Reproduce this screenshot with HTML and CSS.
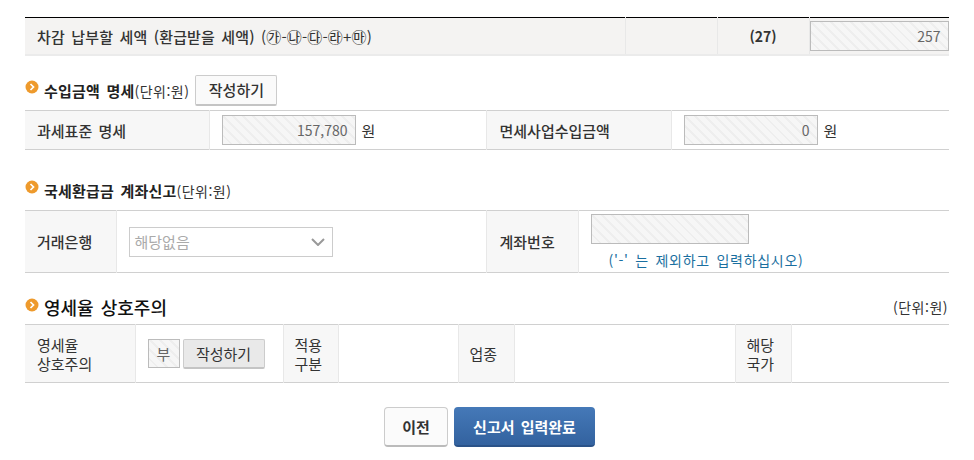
FILE: index.html
```html
<!DOCTYPE html>
<html lang="ko">

<head>
    <meta charset="UTF-8">
    <meta name="viewport" content="width=device-width, initial-scale=1.0">
    <title>신고서 입력</title>
    <link rel="stylesheet" href="styles.css">
</head>

<body>
    <table class="form-table total-table">
        <colgroup>
            <col class="col-total-label">
            <col class="col-total-empty">
            <col class="col-total-no">
            <col>
        </colgroup>
        <tr>
            <th>차감 납부할 세액 (환급받을 세액) <span class="formula">(㉮-㉯-㉰-㉱+㉲)</span></th>
            <th></th>
            <th class="total-no">(27)</th>
            <td class="total-value"><input class="hatch-input total-input" type="text" value="257" readonly></td>
        </tr>
    </table>

    <div class="section-head income-head">
        <svg class="bullet" viewBox="0 0 14 14">
            <circle cx="7" cy="7" r="6.5" fill="#ee9a2c"/>
            <path d="M5.5 4 L8.5 7 L5.5 10" fill="none" stroke="#fff" stroke-width="1.7"/>
        </svg>
        <h2 class="section-title">수입금액 명세</h2>
        <span class="unit">(단위:원)</span>
        <button class="write-btn">작성하기</button>
    </div>
    <table class="form-table income-table">
        <colgroup>
            <col class="col-income-a">
            <col class="col-income-b">
            <col class="col-income-c">
            <col>
        </colgroup>
        <tr>
            <th>과세표준 명세</th>
            <td><input class="hatch-input amount-input" type="text" value="157,780" readonly><span class="won">원</span></td>
            <th>면세사업수입금액</th>
            <td><input class="hatch-input amount-input" type="text" value="0" readonly><span class="won">원</span></td>
        </tr>
    </table>

    <div class="section-head refund-head">
        <svg class="bullet" viewBox="0 0 14 14">
            <circle cx="7" cy="7" r="6.5" fill="#ee9a2c"/>
            <path d="M5.5 4 L8.5 7 L5.5 10" fill="none" stroke="#fff" stroke-width="1.7"/>
        </svg>
        <h2 class="section-title">국세환급금 계좌신고</h2>
        <span class="unit">(단위:원)</span>
    </div>
    <table class="form-table refund-table">
        <colgroup>
            <col class="col-refund-a">
            <col class="col-refund-b">
            <col class="col-refund-c">
            <col>
        </colgroup>
        <tr>
            <th>거래은행</th>
            <td>
                <div class="bank-select">
                    <span>해당없음</span>
                    <svg class="select-arrow" viewBox="0 0 14 8">
                        <path d="M1 1 L7 7 L13 1" fill="none" stroke="#999" stroke-width="2"/>
                    </svg>
                </div>
            </td>
            <th>계좌번호</th>
            <td class="account-cell">
                <input class="hatch-input account-input" type="text" readonly>
                <p class="account-note">('-' 는 제외하고 입력하십시오)</p>
            </td>
        </tr>
    </table>

    <div class="section-head zero-head">
        <svg class="bullet" viewBox="0 0 14 14">
            <circle cx="7" cy="7" r="6.5" fill="#ee9a2c"/>
            <path d="M5.5 4 L8.5 7 L5.5 10" fill="none" stroke="#fff" stroke-width="1.7"/>
        </svg>
        <h2 class="section-title big-title">영세율 상호주의</h2>
        <span class="unit unit-right">(단위:원)</span>
    </div>
    <table class="form-table zero-table">
        <colgroup>
            <col class="col-zero-a">
            <col class="col-zero-b">
            <col class="col-zero-c">
            <col class="col-zero-d">
            <col class="col-zero-e">
            <col class="col-zero-f">
            <col class="col-zero-e">
            <col>
        </colgroup>
        <tr>
            <th class="plain-th">영세율<br>상호주의</th>
            <td>
                <div class="zero-controls">
                    <input class="hatch-input yesno-input" type="text" value="부" readonly>
                    <button class="write-btn write-btn-gray">작성하기</button>
                </div>
            </td>
            <th class="plain-th narrow-th">적용<br>구분</th>
            <td></td>
            <th class="plain-th narrow-th">업종</th>
            <td></td>
            <th class="plain-th narrow-th">해당<br>국가</th>
            <td></td>
        </tr>
    </table>

    <div class="bottom-buttons">
        <button class="prev-btn">이전</button>
        <button class="done-btn">신고서 입력완료</button>
    </div>
</body>

</html>
```

FILE: styles.css
```css
body {
    margin: 0;
    padding: 17px 25px 0 25px;
    font-family: "Noto Sans CJK KR", "Noto Sans", sans-serif;
    font-size: 15px;
    word-spacing: 2px;
    color: #333;
    background-color: white;
}

.form-table {
    width: 924px;
    border-collapse: collapse;
    table-layout: fixed;
    border-top: 1px solid #d0d0d0;
    border-bottom: 1px solid #d0d0d0;
}

.form-table th,
.form-table td {
    padding: 0;
    border-left: 1px solid #e8e8e8;
    text-align: left;
}

.form-table th:first-child {
    border-left: none;
}

.form-table th {
    background-color: #f7f7f7;
    padding-left: 13px;
    font-weight: 500;
}

.form-table th:first-child {
    padding-left: 12px;
}

.form-table td {
    padding-left: 12px;
}

/* hatch fill of the read only boxes */
.hatch-input {
    box-sizing: border-box;
    height: 30px;
    border: 1px solid #bbb;
    padding: 0 7px 0 0;
    text-align: right;
    font-family: inherit;
    font-size: 14px;
    color: #666;
    background: repeating-linear-gradient(45deg, #f6f6f6 0, #f6f6f6 5px, #eeeeee 5px, #eeeeee 7px);
    vertical-align: middle;
}

.total-table {
    height: 39px;
    border-top: 1px solid black;
    border-bottom: 2px solid #ebebeb;
}

.total-table th {
    background-color: #f4f3f2;
    font-weight: 500;
}

.total-table th:first-child {
    letter-spacing: 0.15px;
}

.col-total-label {
    width: 600px;
}

.col-total-empty {
    width: 92px;
}

.col-total-no {
    width: 92px;
}

.total-table .total-no {
    text-align: center;
    font-size: 14px;
    font-weight: 700;
    padding-left: 0;
}

.total-table .total-value {
    background-color: #f4f3f2;
    padding-left: 0;
}

.total-input {
    display: block;
    width: 139px;
}

.formula {
    font-weight: 400;
}

.section-head {
    display: flex;
    align-items: center;
    height: 30px;
}

.income-head {
    margin-top: 19px;
    margin-bottom: 5px;
}

.refund-head {
    margin-top: 25px;
    margin-bottom: 5px;
}

.zero-head {
    margin-top: 20px;
    margin-bottom: 1px;
}

.bullet {
    width: 14px;
    height: 14px;
    margin-right: 5px;
    margin-top: -6px;
    flex: none;
}

.section-title {
    margin: 0;
    font-size: 15px;
    font-weight: 700;
    letter-spacing: 0.2px;
    color: #222;
}

.big-title {
    font-size: 18px;
    font-weight: 500;
    letter-spacing: 0;
    color: #111;
    margin-top: -2px;
}

.unit {
    font-size: 14px;
    letter-spacing: 0.5px;
    margin-top: 2px;
}

.unit-right {
    margin-left: auto;
    margin-right: 1px;
    margin-top: -2px;
}

.write-btn {
    box-sizing: border-box;
    margin-left: 6px;
    width: 82px;
    height: 31px;
    font-family: inherit;
    font-size: 15px;
    font-weight: 500;
    color: #333;
    padding: 0;
    background-color: #fafafa;
    border: 1px solid #ccc;
    border-bottom: 2px solid #c4c4c4;
    border-radius: 2px;
}

.write-btn-gray {
    margin-left: 3px;
    height: 30px;
    background-color: #e9e9e9;
    font-weight: 400;
}

.income-table {
    height: 40px;
}

.col-income-a {
    width: 184px;
}

.col-income-b {
    width: 277px;
}

.col-income-c {
    width: 185px;
}

.amount-input {
    width: 134px;
}

.won {
    margin-left: 6px;
    vertical-align: middle;
}

.refund-table {
    height: 63px;
}

.col-refund-a {
    width: 91px;
}

.col-refund-b {
    width: 370px;
}

.col-refund-c {
    width: 92px;
}

.bank-select {
    box-sizing: border-box;
    display: flex;
    align-items: center;
    justify-content: space-between;
    width: 204px;
    height: 30px;
    padding: 0 7px 0 5px;
    border: 1px solid #ccc;
    color: #aaa;
}

.select-arrow {
    width: 14px;
    height: 8px;
}

.refund-table .account-cell {
    vertical-align: top;
    padding-top: 3px;
}

.account-input {
    display: block;
    width: 158px;
}

.account-note {
    margin: 0;
    padding-left: 18px;
    height: 28px;
    line-height: 32px;
    font-size: 14px;
    letter-spacing: 0.7px;
    word-spacing: 2px;
    color: #1a6fa0;
}

.zero-table {
    height: 59px;
}

.zero-table th {
    line-height: 19px;
}

.zero-table .plain-th {
    font-weight: 400;
}

.zero-table .narrow-th {
    padding-left: 11px;
}

.col-zero-a {
    width: 110px;
}

.col-zero-b {
    width: 148px;
}

.col-zero-c {
    width: 55px;
}

.col-zero-d {
    width: 120px;
}

.col-zero-e {
    width: 56px;
}

.col-zero-f {
    width: 221px;
}

.zero-controls {
    display: flex;
    align-items: center;
}

.yesno-input {
    width: 32px;
    height: 29px;
    padding: 0;
    text-align: center;
    font-size: 15px;
}

.bottom-buttons {
    display: flex;
    justify-content: center;
    gap: 6px;
    margin-top: 24px;
    padding-left: 5px;
}

.prev-btn,
.done-btn {
    box-sizing: border-box;
    height: 40px;
    font-family: inherit;
    font-size: 15px;
    font-weight: 700;
    word-spacing: 2px;
    padding: 0;
    border-radius: 4px;
}

.prev-btn {
    width: 64px;
    color: #333;
    background-color: #fbfbfb;
    border: 1px solid #ccc;
    border-bottom: 2px solid #bbb;
}

.done-btn {
    width: 141px;
    color: white;
    background: linear-gradient(#4579b8, #33629f);
    border: none;
    border-bottom: 2px solid #2a5288;
}
```
